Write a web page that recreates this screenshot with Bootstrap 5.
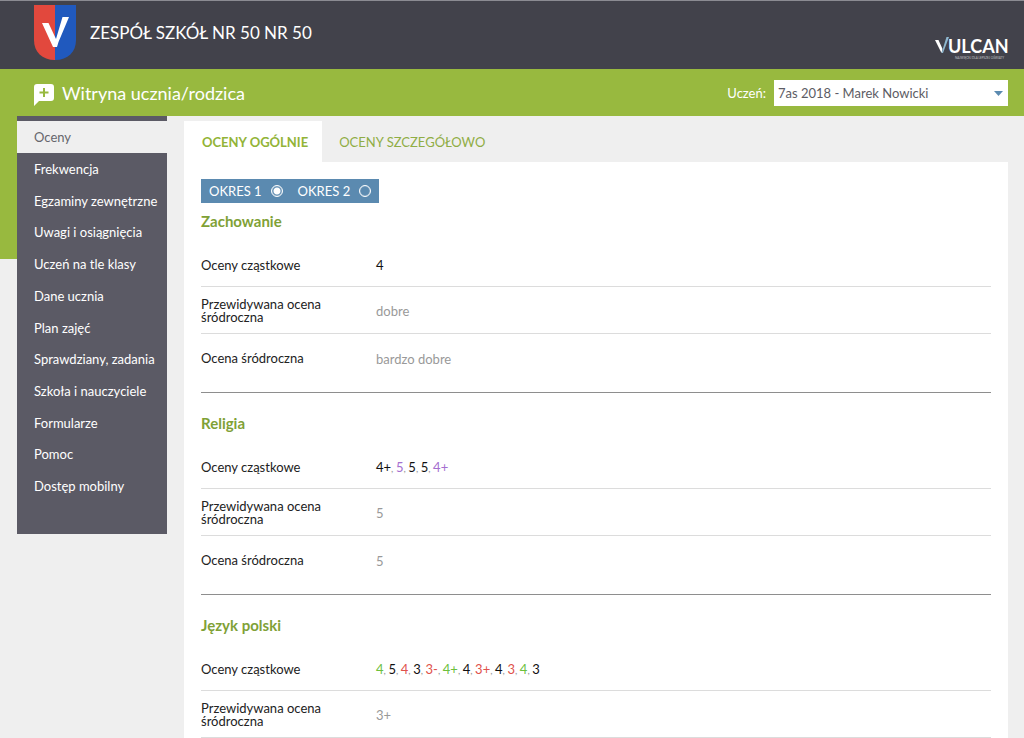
<!DOCTYPE html>
<html lang="pl">
<head>
<meta charset="utf-8">
<meta name="viewport" content="width=device-width, initial-scale=1">
<title>Witryna ucznia/rodzica</title>
<link href="https://cdn.jsdelivr.net/npm/bootstrap@5.3.0/dist/css/bootstrap.min.css" rel="stylesheet">
<style>
  body { font-family: Lato, "Open Sans", sans-serif; font-size: 13px; line-height: 20px; background: #efefef; color: #222; }
  .top-bar { background: #42424b; border-top: 1px solid #8b8b92; height: 69px; padding: 0 16px 0 34px; }
  .school { gap: 14px; padding-bottom: 4px; }
  .school-name { font-size: 17px; line-height: 24px; color: #fff; }
  .app-bar { background: #98b93f; height: 47px; padding: 0 16px 0 34px; color: #fff; }
  .app-name { font-size: 18px; line-height: 24px; }
  .pupil-select { width: 234px; height: 26px; padding: 0 24px 0 4px; border: 0; border-radius: 0; font-size: 13px; line-height: 20px; color: #5c5c64; background-image: none; }
  .pupil-arrow { right: 5px; top: 11px; pointer-events: none; }
  .page-wrap { padding: 0 16px 0 17px; gap: 17px; background: linear-gradient(#98b93f, #98b93f) 0 0 / 17px 143px no-repeat; }
  .side-menu { width: 150px; background: #5b5a65; padding: 5px 0 32px; }
  .side-menu a { color: #fff; padding-left: 17px; text-decoration: none; }
  .side-menu .current { background: #efefef; color: #66666c; height: 32px; }
  .menu-rest { height: 349px; }
  .tab-row { margin-top: 5px; }
  .tab-row a { padding: 0 17px; height: 41px; color: #8fad45; text-decoration: none; }
  .tab-row .current { background: #fff; color: #92b437; font-weight: 700; padding: 0 14px 0 18px; }
  .panel { background: #fff; padding: 17px 17px 0; }
  .term-switch { background: #5b8ab0; color: #fff; height: 24px; padding: 0 8px; gap: 15px; margin-bottom: 8px; }
  .term-switch label { gap: 9px; }
  .term-switch input { appearance: none; width: 12px; height: 12px; margin: 0; border: 1px solid #fff; border-radius: 50%; box-shadow: inset 0 0 1px #fff; }
  .term-switch input:checked { background: radial-gradient(circle, #fff 3px, transparent 4px); }
  .subject { border-bottom: 1px solid #8e8e8e; padding-bottom: 10px; margin-bottom: 20px; }
  .subject.open { border: 0; padding: 0; margin: 0; }
  .subject h2 { font-size: 15px; line-height: 20px; font-weight: 700; color: #7fa136; margin: 0 0 12px; }
  .subject th { width: 175px; padding: 2px 45px 0 0; font-weight: 400; line-height: 13px; }
  .subject td { padding: 2px 0 0; color: #999; }
  .subject .grade-list { font-size: 10px; }
  .grade-list span { font-size: 13px; }
  .subject tr { height: 47px; border-bottom: 1px solid #dcdcdc; }
  .subject tr:first-child { height: 43px; }
  .subject tr:nth-child(3) { height: 49px; border: 0; }
  .g-k { color: #111; } .g-v { color: #a56fd0; } .g-g { color: #6cc03c; } .g-r { color: #e0524c; }
</style>
</head>
<body>
<header>
  <div class="top-bar d-flex justify-content-between">
    <div class="school d-flex align-items-center">
      <svg width="42" height="56" viewBox="0 0 42 56" aria-hidden="true">
        <path d="M0 0H21V55C8 55 0 47 0 35Z" fill="#e2483d"/>
        <path d="M21 0H42V35C42 47 34 55 21 55Z" fill="#2059be"/>
        <path d="M8 18H14.500L22 34L28.500 12H35L24.500 37L23 42H19Z" fill="#fff"/>
      </svg>
      <span class="school-name">ZESPÓŁ SZKÓŁ NR 50 NR 50</span>
    </div>
    <svg class="align-self-end mb-2" width="73" height="26" viewBox="0 0 73 26" role="img" aria-label="VULCAN">
      <path d="M0 5H3.500L7.500 14L6.500 18Z" fill="#fff"/>
      <path d="M6.500 18L11.500 2H14L8 18Z" fill="#8fb8cf"/>
      <text x="13" y="18" font-family="Lato" font-weight="700" font-size="18" fill="#fff">ULCAN</text>
      <text x="20" y="24" font-family="Lato" font-size="3" fill="#c4c4c8">NAJWIĘCEJ DLA LEPSZEJ OŚWIATY</text>
    </svg>
  </div>
  <div class="app-bar d-flex align-items-center justify-content-between">
    <div class="d-flex align-items-center">
      <svg class="mt-1" width="20" height="22" viewBox="0 0 20 22" aria-hidden="true">
        <path d="M3 0H17Q20 0 20 3V14Q20 17 17 17H5L0 22V3Q0 0 3 0Z" fill="#fff"/>
        <path d="M10 4V13M5.500 8.500H14.500" stroke="#98b93f" stroke-width="2"/>
      </svg>
      <span class="app-name ms-2">Witryna ucznia/rodzica</span>
    </div>
    <div class="d-flex align-items-center">
      <label for="pupil" class="me-2">Uczeń:</label>
      <div class="position-relative">
        <select id="pupil" class="form-select pupil-select"><option>7as 2018 - Marek Nowicki</option></select>
        <svg class="pupil-arrow position-absolute" width="9" height="5" viewBox="0 0 9 5" aria-hidden="true"><path d="M0 0H9L4.500 5Z" fill="#5b8ab0"/></svg>
      </div>
    </div>
  </div>
</header>
<div class="page-wrap d-flex align-items-start">
  <nav class="side-menu flex-shrink-0">
    <a href="#" class="current d-flex align-items-center">Oceny</a>
    <div class="menu-rest d-flex flex-column">
      <a href="#" class="flex-fill d-flex align-items-center">Frekwencja</a>
      <a href="#" class="flex-fill d-flex align-items-center">Egzaminy zewnętrzne</a>
      <a href="#" class="flex-fill d-flex align-items-center">Uwagi i osiągnięcia</a>
      <a href="#" class="flex-fill d-flex align-items-center">Uczeń na tle klasy</a>
      <a href="#" class="flex-fill d-flex align-items-center">Dane ucznia</a>
      <a href="#" class="flex-fill d-flex align-items-center">Plan zajęć</a>
      <a href="#" class="flex-fill d-flex align-items-center">Sprawdziany, zadania</a>
      <a href="#" class="flex-fill d-flex align-items-center">Szkoła i nauczyciele</a>
      <a href="#" class="flex-fill d-flex align-items-center">Formularze</a>
      <a href="#" class="flex-fill d-flex align-items-center">Pomoc</a>
      <a href="#" class="flex-fill d-flex align-items-center">Dostęp mobilny</a>
    </div>
  </nav>
  <main class="flex-grow-1">
    <div class="tab-row d-flex">
      <a href="#" class="current d-flex align-items-center">OCENY OGÓLNIE</a>
      <a href="#" class="d-flex align-items-center">OCENY SZCZEGÓŁOWO</a>
    </div>
    <div class="panel">
      <div class="d-flex">
        <div class="term-switch d-flex align-items-center">
          <label class="d-flex align-items-center">OKRES 1 <input type="radio" name="term" checked></label>
          <label class="d-flex align-items-center">OKRES 2 <input type="radio" name="term"></label>
        </div>
      </div>
      <section class="subject">
        <h2>Zachowanie</h2>
        <table class="w-100">
          <tr><th scope="row">Oceny cząstkowe</th><td class="grade-list"><span class="g-k">4</span></td></tr>
          <tr><th scope="row">Przewidywana ocena śródroczna</th><td>dobre</td></tr>
          <tr><th scope="row">Ocena śródroczna</th><td>bardzo dobre</td></tr>
        </table>
      </section>
      <section class="subject">
        <h2>Religia</h2>
        <table class="w-100">
          <tr><th scope="row">Oceny cząstkowe</th><td class="grade-list"><span class="g-k">4+</span>, <span class="g-v">5</span>, <span class="g-k">5</span>, <span class="g-k">5</span>, <span class="g-v">4+</span></td></tr>
          <tr><th scope="row">Przewidywana ocena śródroczna</th><td>5</td></tr>
          <tr><th scope="row">Ocena śródroczna</th><td>5</td></tr>
        </table>
      </section>
      <section class="subject open">
        <h2>Język polski</h2>
        <table class="w-100">
          <tr><th scope="row">Oceny cząstkowe</th><td class="grade-list"><span class="g-g">4</span>, <span class="g-k">5</span>, <span class="g-r">4</span>, <span class="g-k">3</span>, <span class="g-r">3-</span>, <span class="g-g">4+</span>, <span class="g-k">4</span>, <span class="g-r">3+</span>, <span class="g-k">4</span>, <span class="g-r">3</span>, <span class="g-g">4</span>, <span class="g-k">3</span></td></tr>
          <tr><th scope="row">Przewidywana ocena śródroczna</th><td>3+</td></tr>
        </table>
      </section>
    </div>
  </main>
</div>
<script src="https://cdn.jsdelivr.net/npm/bootstrap@5.3.0/dist/js/bootstrap.bundle.min.js"></script>
</body>
</html>
